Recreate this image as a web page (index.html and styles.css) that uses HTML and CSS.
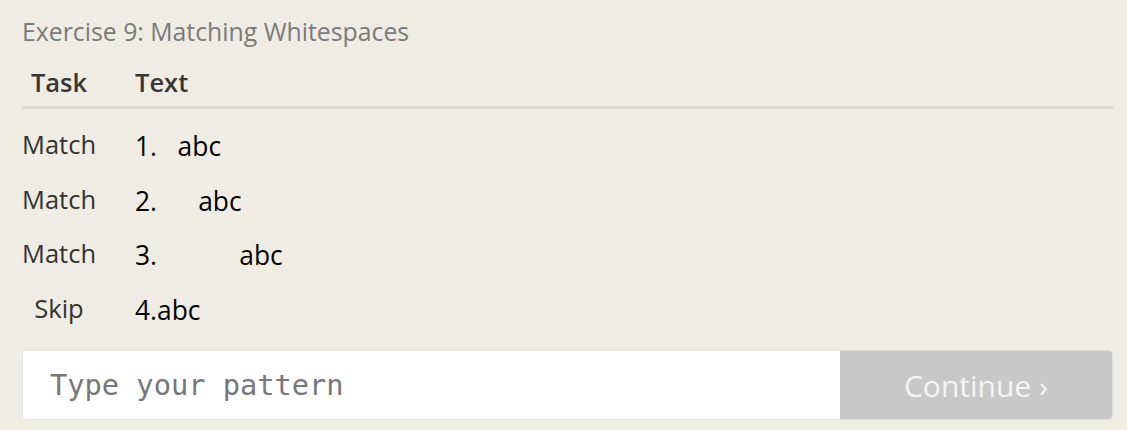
FILE: index.html
```html
<!DOCTYPE html>
<html>
<head>
<meta charset="utf-8">
<link rel="stylesheet" href="styles.css">
</head>
<body>
<div class="lesson">
  <div class="title">Exercise 9: Matching Whitespaces</div>
  <table class="tasks">
    <thead>
      <tr><th class="task">Task</th><th class="text">Text</th></tr>
    </thead>
    <tbody>
      <tr><td class="task">Match</td><td class="text"><span class="pre">1.   abc</span></td></tr>
      <tr><td class="task">Match</td><td class="text"><span class="pre">2.      abc</span></td></tr>
      <tr><td class="task">Match</td><td class="text"><span class="pre">3.            abc</span></td></tr>
      <tr><td class="task">Skip</td><td class="text"><span class="pre">4.abc</span></td></tr>
    </tbody>
  </table>
  <div class="answer">
    <input class="pattern" type="text" placeholder="Type your pattern">
    <button class="continue">Continue ›</button>
  </div>
</div>
</body>
</html>
```
FILE: styles.css
```css
html, body {
  margin: 0;
  padding: 0;
  background: #efece4;
}
body {
  font-family: "Open Sans", "Noto Sans", sans-serif;
}
.lesson {
  padding: 14px 14px 0 22px;
}
.title {
  font-size: 24.8px;
  color: #7a7a7a;
  line-height: 34px;
}
.tasks {
  width: 100%;
  border-collapse: collapse;
  table-layout: fixed;
  margin-top: 10px;
}
.tasks th {
  font-weight: 600;
  font-size: 25.5px;
  color: #3a3535;
  text-align: left;
  height: 48px;
  padding: 0;
  border-bottom: 3px solid #dcd9d3;
  vertical-align: middle;
}
.tasks th.task {
  width: 113px;
  text-align: center;
  padding-right: 39px;
  box-sizing: border-box;
}
.tasks td {
  height: 54.5px;
  padding: 0;
  vertical-align: middle;
}
.tasks td.task {
  font-size: 25.5px;
  color: #333;
  text-align: center;
  padding-right: 39px;
  white-space: nowrap;
}
.tasks td.text {
  font-size: 26.4px;
  color: #000;
}
.pre {
  white-space: pre;
  position: relative;
  top: 2px;
}
.tasks tbody tr:first-child td {
  padding-top: 8px;
}
.answer {
  display: flex;
  margin-top: 15px;
  height: 68px;
  border: 1px solid #e4e1d9;
  border-radius: 4px;
  overflow: hidden;
  background: #fff;
}
.pattern {
  flex: 1;
  border: none;
  outline: none;
  padding: 0 0 0 27px;
  font-family: "DejaVu Sans Mono", monospace;
  font-size: 28.7px;
  background: #fff;
  color: #333;
}
.pattern::placeholder {
  color: #777;
}
.continue {
  width: 272px;
  border: none;
  background: #c8c8c8;
  color: #f4f4f4;
  font-family: "Open Sans", "Noto Sans", sans-serif;
  font-size: 30px;
  padding: 0;
}
```
